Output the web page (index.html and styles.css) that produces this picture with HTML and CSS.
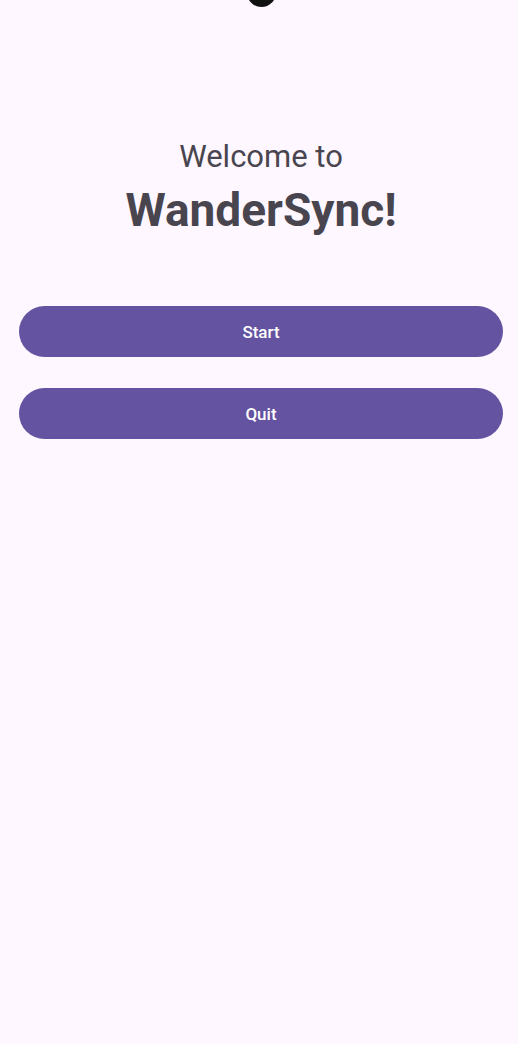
FILE: index.html
```html
<!DOCTYPE html>
<html lang="en">
<head>
    <meta charset="UTF-8">
    <meta name="viewport" content="width=device-width, initial-scale=1.0">
    <title>WanderSync</title>
    <link rel="stylesheet" href="styles.css">
</head>
<body>
    <div class="camera"></div>
    <div class="screen">
        <div class="welcome">
            <p class="welcome-small">Welcome to</p>
            <h1 class="app-name">WanderSync!</h1>
        </div>
        <div class="actions">
            <button class="pill">Start</button>
            <button class="pill">Quit</button>
        </div>
    </div>
</body>
</html>
```

FILE: styles.css
```css
body {
    font-family: Roboto, "Noto Sans", sans-serif;
    background-color: #fef7ff;
    color: #49454f;
    margin: 0;
    padding: 0;
    min-height: 1044px;
    position: relative;
    overflow: hidden;
}
.camera {
    position: absolute;
    top: -22px;
    left: 247px;
    width: 29px;
    height: 29px;
    border-radius: 50%;
    background-color: #111;
}
.screen {
    padding: 137px 15px 0 19px;
}
.welcome {
    text-align: center;
}
.welcome-small {
    margin: 0;
    font-size: 31px;
    line-height: 40px;
    font-weight: 400;
}
.app-name {
    margin: 3px 0 0;
    font-size: 46px;
    line-height: 60px;
    font-weight: 700;
}
.actions {
    margin-top: 66px;
    display: flex;
    flex-direction: column;
    gap: 31px;
}
.pill {
    height: 51px;
    border: none;
    border-radius: 26px;
    background-color: #6353a0;
    color: #fff;
    font-family: Roboto, sans-serif;
    font-size: 17px;
    font-weight: 500;
    cursor: pointer;
}
```
